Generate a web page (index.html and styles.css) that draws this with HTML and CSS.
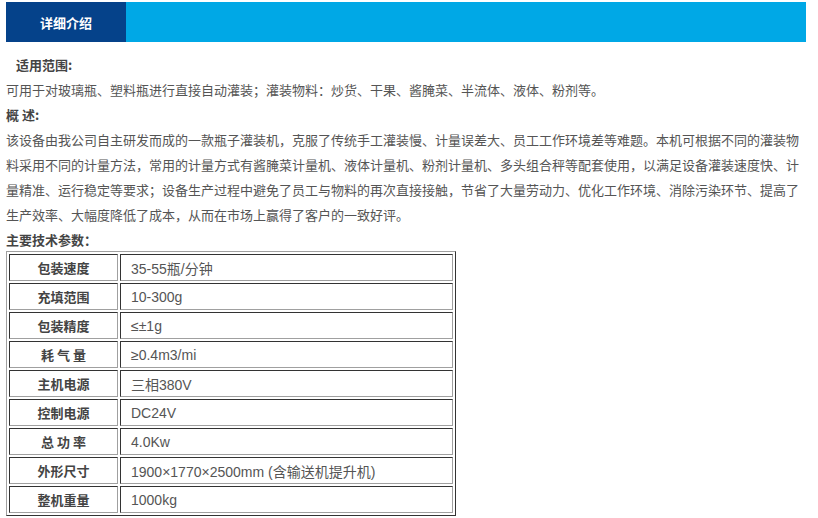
FILE: index.html
```html
<!DOCTYPE html>
<html lang="zh-CN">
<head>
<meta charset="utf-8">
<title>详细介绍</title>
<link rel="stylesheet" href="styles.css">
</head>
<body>
<div class="page">
  <div class="tabbar">
    <div class="tab">详细介绍</div>
  </div>
  <div class="content">
    <p class="line head indent">适用范围:</p>
    <p class="line">可用于对玻璃瓶、塑料瓶进行直接自动灌装；灌装物料：炒货、干果、酱腌菜、半流体、液体、粉剂等。</p>
    <p class="line head">概 述:</p>
    <p class="line">该设备由我公司自主研发而成的一款瓶子灌装机，克服了传统手工灌装慢、计量误差大、员工工作环境差等难题。本机可根据不同的灌装物料采用不同的计量方法，常用的计量方式有酱腌菜计量机、液体计量机、粉剂计量机、多头组合秤等配套使用，以满足设备灌装速度快、计量精准、运行稳定等要求；设备生产过程中避免了员工与物料的再次直接接触，节省了大量劳动力、优化工作环境、消除污染环节、提高了生产效率、大幅度降低了成本，从而在市场上赢得了客户的一致好评。</p>
    <p class="line head">主要技术参数：</p>
    <table class="spec">
      <tbody>
        <tr><th>包装速度</th><td>35-55瓶/分钟</td></tr>
        <tr><th>充填范围</th><td>10-300g</td></tr>
        <tr><th>包装精度</th><td>≤±1g</td></tr>
        <tr><th>耗 气 量</th><td>≥0.4m3/mi</td></tr>
        <tr><th>主机电源</th><td>三相380V</td></tr>
        <tr><th>控制电源</th><td>DC24V</td></tr>
        <tr><th>总 功 率</th><td>4.0Kw</td></tr>
        <tr><th>外形尺寸</th><td>1900×1770×2500mm (含输送机提升机)</td></tr>
        <tr><th>整机重量</th><td>1000kg</td></tr>
      </tbody>
    </table>
  </div>
</div>
</body>
</html>
```

FILE: styles.css
```css
html, body {
  margin: 0;
  padding: 0;
  background: #ffffff;
}

body {
  font-family: "Noto Sans CJK SC", "Liberation Sans", sans-serif;
  color: #555555;
}

.page {
  padding: 2px 12px 0 6px;
  width: 800px;
}

.tabbar {
  height: 40px;
  background: #00a8e6;
  display: flex;
}

.tab {
  width: 120px;
  background: #05428a;
  color: #ffffff;
  font-size: 13px;
  font-weight: bold;
  display: flex;
  align-items: center;
  justify-content: center;
}

.content {
  padding-top: 10px;
}

.line {
  margin: 0;
  font-size: 13px;
  line-height: 25px;
  color: #555555;
}

.head {
  font-weight: bold;
  color: #444444;
}

.indent {
  padding-left: 10px;
}

.spec {
  width: 450px;
  border-collapse: separate;
  border-spacing: 2px;
  border-width: 1px;
  border-style: solid;
  border-color: #a0a0a0 #333333 #333333 #a0a0a0;
  margin-top: -1px;
}

.spec th,
.spec td {
  height: 25px;
  padding: 0;
  border-width: 1px;
  border-style: solid;
  border-color: #333333 #a0a0a0 #a0a0a0 #333333;
  color: #555555;
}

.spec th {
  width: 107px;
  font-size: 13px;
  font-weight: bold;
  color: #444444;
  text-align: center;
}

.spec td {
  font-family: "Liberation Sans", "Noto Sans CJK SC", sans-serif;
  font-size: 14px;
  font-weight: normal;
  text-align: left;
  padding-left: 10px;
}
```
